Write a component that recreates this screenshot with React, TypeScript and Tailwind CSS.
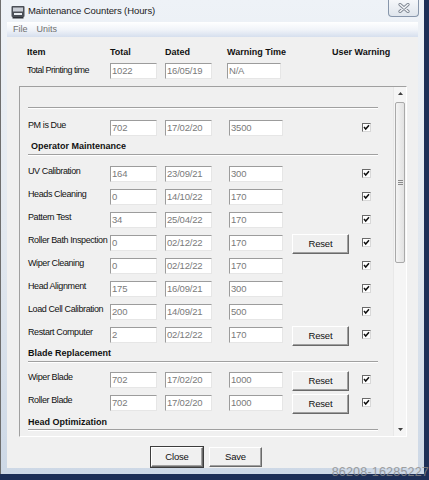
import React from 'react';

type Row = {
  label: string;
  total: string;
  dated: string;
  warning: string;
  reset?: boolean;
};

const operatorRows: Row[] = [
  { label: 'UV Calibration', total: '164', dated: '23/09/21', warning: '300' },
  { label: 'Heads Cleaning', total: '0', dated: '14/10/22', warning: '170' },
  { label: 'Pattern Test', total: '34', dated: '25/04/22', warning: '170' },
  { label: 'Roller Bath Inspection', total: '0', dated: '02/12/22', warning: '170', reset: true },
  { label: 'Wiper Cleaning', total: '0', dated: '02/12/22', warning: '170' },
  { label: 'Head Alignment', total: '175', dated: '16/09/21', warning: '300' },
  { label: 'Load Cell Calibration', total: '200', dated: '14/09/21', warning: '500' },
  { label: 'Restart Computer', total: '2', dated: '02/12/22', warning: '170', reset: true },
];

const bladeRows: Row[] = [
  { label: 'Wiper Blade', total: '702', dated: '17/02/20', warning: '1000', reset: true },
  { label: 'Roller Blade', total: '702', dated: '17/02/20', warning: '1000', reset: true },
];

function Field(props: { value: string; className?: string }) {
  return (
    <div
      className={`h-[16px] shrink-0 border border-t-[#9c9c9c] border-l-[#9c9c9c] border-b-[#e6e6e6] border-r-[#e6e6e6] bg-white pl-[1px] text-[9.5px] leading-[14px] tracking-[-0.2px] text-[#7a7a7a] ${props.className ?? ''}`}
    >
      {props.value}
    </div>
  );
}

function Check() {
  return (
    <div className="flex h-[9px] w-[9px] shrink-0 items-center justify-center border border-t-[#6a6a6a] border-l-[#6a6a6a] border-b-[#d8d8d8] border-r-[#d8d8d8] bg-white">
      <svg width="7" height="7" viewBox="0 0 7 7">
        <path d="M1 3 L2.7 5 L6 1.2" fill="none" stroke="#111" strokeWidth="1.5" />
      </svg>
    </div>
  );
}

function WinButton(props: { label: string; className?: string; isDefault?: boolean }) {
  const outer = props.isDefault ? 'outline outline-1 outline-[#3c3c3c]' : '';
  return (
    <div
      className={`flex h-[20px] shrink-0 items-center justify-center border border-t-white border-l-white border-b-[#6a6a6a] border-r-[#6a6a6a] bg-[#f0f0f0] text-[9.5px] tracking-[-0.2px] text-[#111] shadow-[inset_-1px_-1px_0_#a0a0a0] ${outer} ${props.className ?? ''}`}
    >
      {props.label}
    </div>
  );
}

function ItemRow(props: { row: Row }) {
  const { row } = props;
  return (
    <div className="flex h-[23px] items-center">
      <div className="mb-[4px] w-[82px] shrink-0 whitespace-nowrap text-[9px] tracking-[-0.4px] text-[#111]">
        {row.label}
      </div>
      <Field className="w-[47px]" value={row.total} />
      <Field className="ml-[8px] w-[47px]" value={row.dated} />
      <Field className="ml-[17px] w-[54px]" value={row.warning} />
      {row.reset ? (
        <WinButton className="ml-[9px] mt-[3px] w-[57px]" label="Reset" />
      ) : (
        <div className="ml-[9px] w-[57px] shrink-0" />
      )}
      <div className="ml-[13px]">
        <Check />
      </div>
    </div>
  );
}

function Heading(props: { label: string; className?: string }) {
  return (
    <div className="w-[350px]">
      <div className={`h-[15px] text-[9px] font-bold leading-[13px] text-[#111] ${props.className ?? ''}`}>
        {props.label}
      </div>
      <div className="border-t border-b border-t-[#a0a0a0] border-b-white" />
    </div>
  );
}

function ScrollBar() {
  return (
    <div className="flex w-[13px] shrink-0 flex-col border-l border-[#e8e8e8] bg-[#f5f5f5]">
      <div className="flex h-[13px] items-center justify-center">
        <svg width="5" height="3" viewBox="0 0 5 3">
          <path d="M0 3 L2.5 0 L5 3 Z" fill="#404040" />
        </svg>
      </div>
      <div className="mx-[1px] mt-[2px] flex h-[161px] items-center justify-center rounded-[2px] border border-[#a9a9a9] bg-gradient-to-r from-[#f4f4f4] to-[#e2e2e2]">
        <div className="flex flex-col gap-[1px]">
          <div className="h-px w-[5px] bg-[#8a8a8a]" />
          <div className="h-px w-[5px] bg-[#8a8a8a]" />
          <div className="h-px w-[5px] bg-[#8a8a8a]" />
        </div>
      </div>
      <div className="flex-1" />
      <div className="flex h-[13px] items-center justify-center">
        <svg width="5" height="3" viewBox="0 0 5 3">
          <path d="M0 0 L2.5 3 L5 0 Z" fill="#404040" />
        </svg>
      </div>
    </div>
  );
}

export default function App() {
  return (
    <div className="relative h-[480px] w-[429px] overflow-hidden bg-[#1d2f57] font-['Liberation_Sans',Arial,sans-serif]">
      <div className="flex h-[474px] w-[424px] flex-col border-l border-[#6f6f6f] bg-gradient-to-b from-[#eef2f7] via-[#e2e8ef] to-[#cdd8e6] pl-[6px] pr-[6px] pb-[6px]">
        {/* title bar */}
        <div className="flex h-[22px] shrink-0 items-center">
          <svg className="ml-[4px] mt-[1px]" width="14" height="14" viewBox="0 0 14 14">
            <rect x="0.5" y="1" width="13" height="11" rx="1" fill="#4a4f57" />
            <rect x="2" y="2.5" width="10" height="4" fill="#c9ced6" />
            <rect x="3" y="8" width="8" height="2" fill="#e9edf2" />
            <rect x="1.5" y="12" width="11" height="1.5" fill="#2b2f35" />
          </svg>
          <div className="ml-[3px] text-[9.5px] tracking-[-0.1px] text-[#1b1b1b]">Maintenance Counters (Hours)</div>
          <div className="ml-auto -mr-[1px] flex h-[17px] w-[31px] items-center justify-center self-start rounded-b-[4px] border border-t-0 border-[#8796ab] bg-gradient-to-b from-[#f5f7fa] to-[#dfe5ec]">
            <svg width="12" height="10" viewBox="0 0 12 10">
              <path d="M2 1.5 L10 8.5 M10 1.5 L2 8.5" stroke="#7d8591" strokeWidth="3.2" strokeLinecap="round" />
              <path d="M2 1.5 L10 8.5 M10 1.5 L2 8.5" stroke="#f4f6f8" strokeWidth="1.5" strokeLinecap="round" />
            </svg>
          </div>
        </div>

        {/* menu bar */}
        <div className="flex h-[15px] shrink-0 items-center gap-[9px] bg-gradient-to-b from-[#ffffff] via-[#f1f4f9] to-[#d6dfee] pl-[6px] text-[9px] text-[#6f6f6f]">
          <span>File</span>
          <span>Units</span>
        </div>

        {/* client area */}
        <div className="flex flex-1 flex-col bg-[#f0f0f0]">
          <div className="mt-[9px] flex pl-[20px] text-[9px] font-bold leading-[13px] text-[#111]">
            <div className="w-[83px]">Item</div>
            <div className="w-[55px]">Total</div>
            <div className="w-[62px]">Dated</div>
            <div className="w-[105px]">Warning Time</div>
            <div>User Warning</div>
          </div>

          <div className="mt-[4px] flex items-center pl-[20px]">
            <div className="w-[83px] whitespace-nowrap text-[9px] tracking-[-0.5px] text-[#111]">Total Printing time</div>
            <Field className="w-[47px]" value="1022" />
            <Field className="ml-[8px] w-[47px]" value="16/05/19" />
            <Field className="ml-[15px] w-[54px]" value="N/A" />
          </div>

          <div className="ml-[12px] mt-[7px] flex h-[351px] w-[388px] border border-t-[#a0a0a0] border-l-[#a0a0a0] border-b-white border-r-white">
            <div className="flex-1 overflow-hidden pl-[8px]">
              <div className="mt-[20px] w-[350px] border-t border-b border-t-[#a0a0a0] border-b-white" />
              <div className="mt-[7px]">
                <ItemRow row={{ label: 'PM is Due', total: '702', dated: '17/02/20', warning: '3500' }} />
              </div>
              <Heading className="pl-[3px] pt-[1px]" label="Operator Maintenance" />
              <div className="mt-[6px]">
                {operatorRows.map((r) => (
                  <ItemRow key={r.label} row={r} />
                ))}
              </div>
              <Heading className="pt-[1px]" label="Blade Replacement" />
              <div className="mt-[5px]">
                {bladeRows.map((r) => (
                  <ItemRow key={r.label} row={r} />
                ))}
              </div>
              <Heading className="pt-[2px]" label="Head Optimization" />
            </div>
            <ScrollBar />
          </div>

          <div className="mt-[10px] flex pl-[144px]">
            <WinButton className="w-[52px]" isDefault label="Close" />
            <WinButton className="ml-[6px] w-[53px]" label="Save" />
          </div>
        </div>
      </div>

      <div className="absolute -bottom-[2px] right-0 text-[12.5px] tracking-[0.2px] text-[#8b8b8b] opacity-80">
        86208-16285227
      </div>
    </div>
  );
}
